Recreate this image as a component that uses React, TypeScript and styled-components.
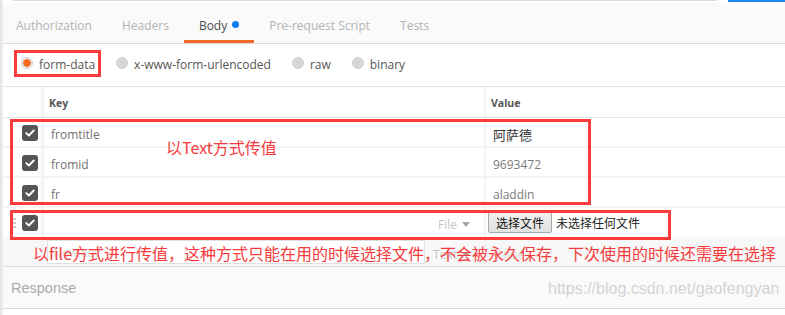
import styled, {createGlobalStyle} from 'styled-components'

const GlobalStyle = createGlobalStyle`
  html, body {
    margin: 0;
    padding: 0;
    background: #fff;
  }
  body {
    font-family: 'Open Sans', 'Noto Sans CJK SC', sans-serif;
    overflow: hidden;
  }
`

const Shell = styled.div`
  position: relative;
  display: flex;
  width: 785px;
  height: 315px;
  overflow: hidden;
`

const Edge = styled.div`
  width: 3px;
  flex: none;
  background: linear-gradient(to right, #e2e2e2, #f1f1f1);
`

const Main = styled.div`
  flex: 1;
  display: flex;
  flex-direction: column;
  min-width: 0;
`

const TopBar = styled.div`
  height: 3px;
  display: flex;
  padding-left: 10px;
`

const UrlEdge = styled.div`
  width: 704px;
  height: 1px;
  background: #d9d9d9;
`

const SendEdge = styled.div`
  flex: 1;
  height: 2px;
  margin-left: 11px;
  background: #1b87ef;
`

const TabBar = styled.div`
  height: 40px;
  display: flex;
  background: #fafafa;
  border-bottom: 1px solid #dcdcdc;
`

const Tab = styled.div<{$active?: boolean}>`
  box-sizing: border-box;
  display: flex;
  align-items: center;
  padding: ${p => (p.$active ? '7px' : '4px')} 15px 0;
  font-size: 12px;
  color: ${p => (p.$active ? '#4d4d4d' : '#b3b3b3')};
  border-bottom: ${p => (p.$active ? '3px solid #f26b26' : 'none')};
  &:first-child {
    margin-left: -2px;
  }
`

const Dot = styled.span`
  width: 7px;
  height: 7px;
  border-radius: 50%;
  background: #0b7df0;
  margin-left: 5px;
  margin-top: -1px;
`

const ModeBar = styled.div`
  height: 42px;
  display: flex;
  align-items: center;
  padding-left: 18px;
  gap: 21px;
  border-bottom: 1px solid #e2e2e2;
`

const ModeOption = styled.label`
  display: flex;
  align-items: center;
  gap: 6px;
  margin-top: -1px;
  font-size: 12px;
  color: #555;
`

const Radio = styled.span<{$on?: boolean}>`
  box-sizing: border-box;
  width: 12px;
  height: 12px;
  margin-top: -3px;
  border-radius: 50%;
  border: 1px solid #cdcdcd;
  background: ${p =>
    p.$on
      ? 'radial-gradient(circle, #f26b21 0 3.5px, #efefef 4.2px)'
      : 'radial-gradient(circle, #d6d6d6 0 4px, #dedede 5px)'};
`

const Row = styled.div<{$head?: boolean; $tint?: string; $line?: string}>`
  display: flex;
  height: ${p => (p.$head ? '30px' : '28px')};
  background: ${p => p.$tint || '#fff'};
  border-bottom: ${p => p.$line || '2px solid #f3f3f3'};
`

const CheckCell = styled.div`
  width: 41px;
  flex: none;
  display: flex;
  align-items: center;
  justify-content: flex-end;
  padding: 2px 3px 0 9px;
  box-sizing: border-box;
  border-right: 3px solid #f4f4f4;
`

const KeyCell = styled.div`
  width: 442px;
  flex: none;
  display: flex;
  align-items: center;
  padding: 5px 0 0 7px;
  box-sizing: border-box;
  border-right: 2px solid #f3f3f3;
  font-size: 12px;
  color: #717171;
`

const ValueCell = styled.div`
  flex: 1;
  display: flex;
  align-items: center;
  padding: 5px 0 0 7px;
  font-size: 12px;
  color: #7a7a7a;
`

const HeadText = styled.span`
  font-size: 10.5px;
  font-weight: 700;
  color: #555;
  margin-left: -2px;
  margin-top: -4px;
`

const CjkValue = styled.span`
  font-family: 'Noto Sans CJK SC', sans-serif;
  font-size: 13px;
  color: #333;
`

const Box = styled.span`
  width: 16px;
  height: 16px;
  border-radius: 3px;
  background: #555;
  display: flex;
  align-items: center;
  justify-content: center;
`

const Handle = styled.span`
  margin-right: auto;
  display: flex;
`

const TypeSelect = styled.span`
  margin-left: auto;
  margin-right: 14px;
  display: flex;
  align-items: center;
  gap: 5px;
  font-size: 12px;
  color: #c4c4c4;
`

const Caret = styled.span`
  width: 0;
  height: 0;
  border-left: 4px solid transparent;
  border-right: 4px solid transparent;
  border-top: 5px solid #a6a6a6;
`

const FileButton = styled.button`
  height: 21px;
  margin: -5px 0 0 -5px;
  padding: 0 7px;
  border: 1px solid #a9a9a9;
  border-radius: 2px;
  background: linear-gradient(#f0f0f0, #e1e1e1);
  font-family: 'Noto Sans CJK SC', sans-serif;
  font-size: 12px;
  color: #111;
  line-height: 19px;
`

const FileLabel = styled.span`
  margin: -5px 0 0 4px;
  font-family: 'Noto Sans CJK SC', sans-serif;
  font-size: 12px;
  color: #222;
`

const NewKeyInput = styled.div`
  width: 378px;
  height: 24px;
  margin: -5px 0 0 -4px;
  box-sizing: border-box;
  border: 1px solid #e0e0e0;
  background: #fff;
  display: flex;
  align-items: center;
  padding-left: 5px;
  color: #d8d8d8;
  font-size: 12px;
`

const Placeholder = styled.span`
  color: #d8d8d8;
  font-size: 12px;
`

const Response = styled.div`
  height: 41px;
  display: flex;
  align-items: center;
  padding-left: 8px;
  background: #fafafa;
  border-bottom: 1px solid #dcdcdc;
  font-family: 'Liberation Sans', Arial, sans-serif;
  font-size: 14.5px;
  color: #ababab;
`

const Mark = styled.div<{$x: number; $y: number; $w: number; $h: number}>`
  position: absolute;
  left: ${p => p.$x}px;
  top: ${p => p.$y}px;
  width: ${p => p.$w}px;
  height: ${p => p.$h}px;
  box-sizing: border-box;
  border: 3px solid #fb3c3c;
  pointer-events: none;
`

const Note = styled.div<{$x: number; $y: number}>`
  position: absolute;
  left: ${p => p.$x}px;
  top: ${p => p.$y}px;
  font-family: 'Noto Sans CJK SC', sans-serif;
  font-size: 16px;
  line-height: 18px;
  color: #f53b3b;
  white-space: nowrap;
`

const Watermark = styled.div`
  position: absolute;
  left: 548px;
  top: 280px;
  font-family: 'Liberation Sans', Arial, sans-serif;
  font-size: 16px;
  color: #d4d4d4;
  white-space: nowrap;
`

const Check = () => (
  <Box>
    <svg width='10' height='8' viewBox='0 0 10 8'>
      <path
        d='M1.3 4.1 L3.9 6.5 L8.7 1.5'
        stroke='#fff'
        strokeWidth='1.9'
        fill='none'
        strokeLinecap='round'
        strokeLinejoin='round'
      />
    </svg>
  </Box>
)

const tabs = ['Authorization', 'Headers', 'Body', 'Pre-request Script', 'Tests']
const modes = ['form-data', 'x-www-form-urlencoded', 'raw', 'binary']
const params = [
  {key: 'fromtitle', value: '阿萨德', cjk: true},
  {key: 'fromid', value: '9693472'},
  {key: 'fr', value: 'aladdin'},
]

const App = () => (
  <Shell>
    <GlobalStyle />
    <Edge />
    <Main>
      <TopBar>
        <UrlEdge />
        <SendEdge />
      </TopBar>
      <TabBar>
        {tabs.map(t => (
          <Tab key={t} $active={t === 'Body'}>
            {t}
            {t === 'Body' && <Dot />}
          </Tab>
        ))}
      </TabBar>
      <ModeBar>
        {modes.map((m, i) => (
          <ModeOption key={m}>
            <Radio $on={i === 0} />
            {m}
          </ModeOption>
        ))}
      </ModeBar>
      <Row $head $line='1px solid #e6e6e6'>
        <CheckCell />
        <KeyCell>
          <HeadText>Key</HeadText>
        </KeyCell>
        <ValueCell>
          <HeadText>Value</HeadText>
        </ValueCell>
      </Row>
      {params.map(p => (
        <Row key={p.key}>
          <CheckCell>
            <Check />
          </CheckCell>
          <KeyCell>{p.key}</KeyCell>
          <ValueCell>{p.cjk ? <CjkValue>{p.value}</CjkValue> : p.value}</ValueCell>
        </Row>
      ))}
      <Row $line='2px solid #fafafa'>
        <CheckCell>
          <Handle>
            <svg width='4' height='10' viewBox='0 0 4 10'>
              <rect x='0' y='0' width='4' height='2' fill='#c9c9c9' />
              <rect x='0' y='4' width='4' height='2' fill='#c9c9c9' />
              <rect x='0' y='8' width='4' height='2' fill='#c9c9c9' />
            </svg>
          </Handle>
          <Check />
        </CheckCell>
        <KeyCell>
          <TypeSelect>
            File <Caret />
          </TypeSelect>
        </KeyCell>
        <ValueCell>
          <FileButton>选择文件</FileButton>
          <FileLabel>未选择任何文件</FileLabel>
        </ValueCell>
      </Row>
      <Row $tint='#f8f8f8' $line='1px solid #dcdcdc'>
        <CheckCell />
        <KeyCell>
          <NewKeyInput>New key</NewKeyInput>
          <TypeSelect>
            Text <Caret />
          </TypeSelect>
        </KeyCell>
        <ValueCell>
          <Placeholder>Value</Placeholder>
        </ValueCell>
      </Row>
      <Response>Response</Response>
    </Main>

    <Mark $x={14} $y={50} $w={87} $h={27} />
    <Mark $x={10} $y={119} $w={581} $h={86} />
    <Mark $x={10} $y={210} $w={661} $h={30} />
    <Note $x={166} $y={138}>以Text方式传值</Note>
    <Note $x={33} $y={244}>
      以file方式进行传值，这种方式只能在用的时候选择文件，不会被永久保存，下次使用的时候还需要在选择
    </Note>
    <Watermark>https://blog.csdn.net/gaofengyan</Watermark>
  </Shell>
)

export default App
